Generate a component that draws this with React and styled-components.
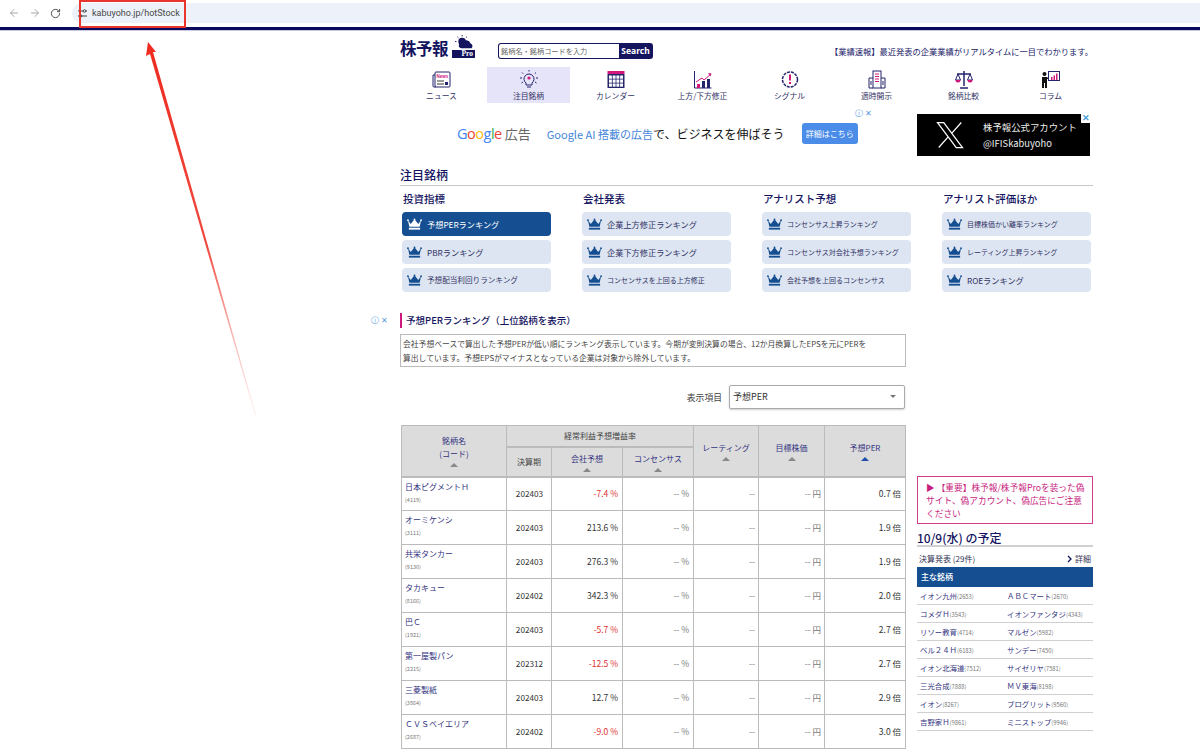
import styled, { createGlobalStyle } from 'styled-components'
import { ArrowLeft, ArrowRight, RotateCw } from 'lucide-react'

const GlobalStyle = createGlobalStyle`
  html, body { margin: 0; padding: 0; background: #fff; }
  body {
    height: 749px;
    overflow: hidden;
    font-family: "Noto Sans CJK JP", "Noto Sans", sans-serif;
    color: #333;
  }
  * { box-sizing: border-box; }
`

const Screen = styled.div`
  position: relative;
  width: 1200px;
  height: 749px;
  overflow: hidden;
`

/* browser chrome */
const BrowserBar = styled.div`
  height: 31px;
  display: flex;
  align-items: flex-start;
  padding: 3px 0 0 3px;
  border-bottom: 1px solid #c9c9e0;
  box-shadow: inset 0 -3px 0 #0a0a5c;
`
const ToolButton = styled.div`
  width: 21px;
  height: 20px;
  display: flex;
  align-items: center;
  justify-content: center;
  color: ${({ $on }) => ($on ? '#444' : '#a8a8a8')};
`
const UrlPill = styled.div`
  margin-left: 6px;
  flex: 1;
  height: 20px;
  background: #edf2fa;
  border-radius: 10px 0 0 10px;
  display: flex;
  align-items: center;
  padding-left: 2px;
  font: 400 9px Roboto, sans-serif;
  color: #474747;
`
const TuneBadge = styled.div`
  width: 16px;
  height: 16px;
  margin-right: 2px;
  color: #444;
  display: flex;
  align-items: center;
  justify-content: center;
`
const RedBox = styled.div`
  position: absolute;
  left: 79px;
  top: 0;
  width: 107px;
  height: 28px;
  border: 2px solid #e8352e;
`
const ArrowMark = styled.svg`
  position: absolute;
  left: 140px;
  top: 38px;
`
const AdChoice = styled.div`
  position: absolute;
  left: ${({ $x }) => $x}px;
  top: ${({ $y }) => $y}px;
  font: 400 8px "Liberation Sans", sans-serif;
  color: #5a9bd8;
  display: flex;
  gap: 2px;
  align-items: center;
`

/* page */
const Page = styled.div`
  margin-left: 400px;
  width: 693px;
`
const Header = styled.header`
  height: 36px;
  display: flex;
  align-items: flex-start;
`
const Logo = styled.div`
  width: 75px;
  height: 24px;
  margin-top: 3px;
  position: relative;
  display: flex;
  align-items: flex-end;
`
const LogoText = styled.span`
  font: 700 16.5px/20px "Noto Sans CJK JP", serif;
  color: #14145f;
  letter-spacing: -0.5px;
`
const ProTag = styled.span`
  position: absolute;
  right: 0;
  bottom: 0;
  width: 23px;
  height: 8px;
  background: #14145f;
  color: #fff;
  font: 700 7.5px/8px "Liberation Serif", serif;
  text-align: right;
  padding-right: 2px;
`
const SunCloud = styled.svg`
  position: absolute;
  right: 0;
  top: 0;
`
const Search = styled.form`
  margin: 12px 0 0 23px;
  width: 155px;
  height: 16px;
  display: flex;
  background: #14145f;
  border-radius: 3px;
  padding: 1px;
`
const SearchInput = styled.div`
  width: 120px;
  background: #fff;
  border-radius: 2px 0 0 2px;
  font-size: 7.2px;
  line-height: 14px;
  color: #666;
  padding-left: 2px;
`
const SearchButton = styled.div`
  flex: 1;
  text-align: center;
  color: #fff;
  font: 700 8.5px/14px "Noto Sans", sans-serif;
`
const Tagline = styled.div`
  margin: 14px 0 0 auto;
  font-size: 8.25px;
  line-height: 12px;
  color: #1c1c6a;
`
const Nav = styled.nav`
  margin-left: -2px;
  width: 696px;
  display: grid;
  grid-template-columns: repeat(8, 87px);
`
const NavItem = styled.a`
  margin: 0 2px;
  height: 36px;
  background: ${({ $active }) => ($active ? '#e6e4f8' : 'transparent')};
  display: flex;
  flex-direction: column;
  align-items: center;
  padding-top: 3px;
  font-size: 7.8px;
  line-height: 10px;
  color: #333366;
  svg { display: block; margin-bottom: 2px; }
`
const AdRow = styled.div`
  height: 57px;
  position: relative;
  display: flex;
`
const GoogleAd = styled.div`
  margin: 17px 0 0 57px;
  height: 26px;
  display: flex;
  align-items: center;
`
const GoogleWord = styled.span`
  font: 500 14.5px "Open Sans", sans-serif;
  letter-spacing: -0.5px;
  margin-right: 3px;
`
const Letter = styled.span`
  color: ${({ $c }) => $c};
`
const AdLabel = styled.span`
  font-size: 13px;
  color: #666;
  margin-right: 16px;
`
const AdCopy = styled.span`
  font-size: 12px;
  color: #111;
  width: 255px;
  white-space: nowrap;
`
const AdBlue = styled.span`
  font-size: 11px;
  color: #4285d8;
`
const AdButton = styled.div`
  width: 56px;
  height: 21px;
  background: #4a8ce8;
  border-radius: 3px;
  color: #fff;
  font-size: 8px;
  line-height: 21px;
  text-align: center;
`
const XBanner = styled.div`
  position: absolute;
  left: 517px;
  top: 11px;
  width: 173px;
  height: 42px;
  background: #000;
  color: #eee;
  display: flex;
  align-items: center;
  padding-left: 18px;
`
const XText = styled.div`
  margin-left: 18px;
  font-size: 9.4px;
  line-height: 16px;
  white-space: nowrap;
`
const XClose = styled.span`
  position: absolute;
  right: 0;
  top: 0;
  width: 9px;
  height: 9px;
  background: #fff;
  color: #4aa0d8;
  font: 700 9px/9px "Liberation Sans", sans-serif;
  text-align: center;
`
const SectionTitle = styled.h2`
  margin: 5px 0 0;
  height: 21px;
  font-size: 12px;
  font-weight: 500;
  line-height: 19px;
  color: #14145f;
  border-bottom: 1px solid #c8c8c8;
`
const RankGrid = styled.div`
  margin-top: 5px;
  padding-left: 2px;
  display: grid;
  grid-template-columns: repeat(4, 149px);
  column-gap: 31px;
`
const RankColumn = styled.div`
  display: flex;
  flex-direction: column;
  gap: 4px;
`
const RankHead = styled.h3`
  margin: 0 0 0 1px;
  height: 17px;
  font-size: 10.5px;
  font-weight: 500;
  line-height: 16px;
  color: #14145f;
`
const RankButton = styled.a`
  height: 24px;
  border-radius: 4px;
  background: ${({ $active }) => ($active ? '#154f92' : '#dce5f1')};
  color: ${({ $active }) => ($active ? '#fff' : '#333366')};
  font-size: ${({ $size }) => $size || 8.2}px;
  display: flex;
  align-items: center;
  padding: 0 0 1px 5px;
  white-space: nowrap;
  svg { margin-right: 5px; flex: none; }
`
const Columns = styled.div`
  display: flex;
  gap: 11px;
`
const Main = styled.main`
  width: 506px;
  margin-top: 21px;
`
const RankingTitle = styled.h3`
  margin: 0;
  height: 15px;
  padding-left: 4px;
  border-left: 2px solid #d0187c;
  font-size: 9.5px;
  font-weight: 500;
  line-height: 14px;
  color: #14145f;
`
const Notice = styled.p`
  margin: 6px 0 0;
  height: 33px;
  border: 1px solid #bbb;
  padding: 2px 32px 2px 2px;
  font-size: 7.8px;
  line-height: 14px;
  color: #444;
`
const FilterRow = styled.div`
  margin-top: 18px;
  height: 24px;
  display: flex;
  align-items: center;
  justify-content: flex-end;
  padding-right: 1px;
  font-size: 8.8px;
  color: #444;
`
const Select = styled.div`
  position: relative;
  margin-left: 7px;
  width: 176px;
  height: 24px;
  border: 1px solid #aaa;
  border-radius: 2px;
  box-shadow: 0 1px 2px rgba(0,0,0,.2);
  padding-left: 3px;
  font-size: 9px;
  line-height: 22px;
  color: #333;
`
const Caret = styled.span`
  position: absolute;
  right: 8px;
  top: 9px;
  border: 3px solid transparent;
  border-top: 3px solid #777;
`
const RankTable = styled.table`
  margin: 16px 0 0 1px;
  width: 504px;
  table-layout: fixed;
  border-collapse: collapse;
  font-size: 8px;
  border: 1px solid #bbb;
`
const Th = styled.th`
  background: #dcdcdc;
  border: 1px solid #bbb;
  border-bottom-width: 2px;
  font-weight: 400;
  text-align: center;
  padding: 0;
  line-height: 13px;
  color: ${({ $plain }) => ($plain ? '#444' : '#333380')};
`
const SortUp = styled.span`
  display: block;
  width: 0;
  margin: 3px auto 0;
  border: 4px solid transparent;
  border-top: 0;
  border-bottom: 4px solid ${({ $on }) => ($on ? '#1f4fa8' : '#888')};
`
const Row = styled.tr`
  height: 34px;
`
const NameCell = styled.td`
  border: 1px solid #bbb;
  padding: 2px 0 0 3px;
  vertical-align: top;
  color: #333380;
  line-height: 13px;
`
const Code = styled.small`
  display: block;
  font-size: 5.5px;
  line-height: 9px;
  margin-top: 3px;
  color: #777;
`
const Td = styled.td`
  border: 1px solid #bbb;
  padding: ${({ $center, $pad }) => ($center ? '0 0 2px 1px' : `0 ${$pad || 4}px 2px 0`)};
  text-align: ${({ $center }) => ($center ? 'center' : 'right')};
  font-size: ${({ $center }) => ($center ? 8.2 : 8.5)}px;
  color: ${({ $red, $dim }) => ($red ? '#e03030' : $dim ? '#777' : '#333')};
`
const Aside = styled.aside`
  width: 176px;
  padding-top: 184px;
`
const Warning = styled.a`
  display: block;
  height: 48px;
  border: 1px solid #cc3f8f;
  padding: 4px 6px 0 8px;
  font-size: 8.7px;
  line-height: 13px;
  color: #c81e80;
`
const ScheduleTitle = styled.h3`
  margin: 5px 0 0;
  height: 18px;
  border-bottom: 2px solid #d0d0d0;
  font-size: 12px;
  font-weight: 500;
  line-height: 17px;
  color: #14145f;
`
const EarningsRow = styled.div`
  height: 20px;
  display: flex;
  align-items: center;
  justify-content: space-between;
  padding: 3px 2px 0 2px;
  font-size: 8px;
  color: #333355;
`
const MoreLink = styled.span`
  display: flex;
  align-items: center;
  gap: 2px;
`
const BlueBar = styled.div`
  height: 20px;
  background: #154f92;
  color: #fff;
  font-size: 8px;
  font-weight: 500;
  line-height: 20px;
  padding-left: 4px;
`
const StockList = styled.ul`
  margin: 0;
  padding: 0;
  list-style: none;
`
const StockRow = styled.li`
  height: 18px;
  display: grid;
  grid-template-columns: 87px 87px;
  align-items: center;
  border-bottom: 1px solid #d0d0d0;
  padding-left: 3px;
`
const Stock = styled.a`
  font-size: 7.4px;
  color: #333380;
  white-space: nowrap;
  small { font-size: 5.8px; color: #777; }
`

function Crown({ color = '#154f92' }) {
  return (
    <svg width="15" height="14" viewBox="0 0 16 14">
      <path d="M1 3l3 4 4-5 4 5 3-4-1.500 7h-11z" fill={color} />
      <circle cx="1" cy="3" r="1" fill={color} />
      <circle cx="8" cy="2" r="1" fill={color} />
      <circle cx="15" cy="3" r="1" fill={color} />
      <rect x="2" y="11" width="12" height="2" fill={color} />
    </svg>
  )
}

const navy = '#25256e'
const pink = '#d0187c'

const NewsIcon = () => (
  <svg width="20" height="19" viewBox="0 0 20 19" fill="none">
    <rect x="3" y="2" width="15" height="15" rx="1" fill="#fff" stroke={navy} />
    <path d="M3 5H1v11q0 1 1 1h2" stroke={navy} />
    <text x="10.500" y="8" fontSize="4.500" fontWeight="700" fill={pink} textAnchor="middle" fontFamily="Liberation Sans">News</text>
    <rect x="5" y="10" width="7" height="2" fill="#999" />
    <rect x="5" y="13" width="7" height="2" fill="#999" />
    <rect x="13" y="12" width="3" height="3" fill={navy} />
  </svg>
)
const BulbIcon = () => (
  <svg width="20" height="19" viewBox="0 0 20 19" fill="none" stroke={navy}>
    <path d="M7 13a5 5 0 1 1 6 0v2H7z" fill="#e6e4f8" />
    <path d="M8 17h4" />
    <circle cx="10" cy="8" r="1.600" fill={pink} stroke="none" />
    <path d="M10 0v1.500M3 2.500l1.200 1.200M17 2.500l-1.200 1.200M1 8h2M17 8h2M2.500 13l1.500-1M17.500 13l-1.500-1" />
  </svg>
)
const CalendarIcon = () => (
  <svg width="20" height="19" viewBox="0 0 20 19">
    <rect x="1.500" y="1" width="17" height="3" fill={pink} />
    <rect x="1.500" y="4" width="17" height="14" fill={navy} />
    {[0, 1, 2, 3].map((c) =>
      [0, 1, 2].map((r) => <rect key={`${c}${r}`} x={3 + c * 3.7} y={5.5 + r * 4} width="2.900" height="3.200" fill="#fff" />)
    )}
  </svg>
)
const ChartIcon = () => (
  <svg width="20" height="19" viewBox="0 0 20 19" fill="none">
    <path d="M1.500 1v17h17" stroke={navy} />
    <rect x="4" y="14" width="3" height="4" fill={pink} />
    <rect x="9" y="11" width="3" height="7" fill={navy} />
    <rect x="14" y="9" width="3" height="9" fill={navy} />
    <path d="M3 12l6-4 2 2 7-6" stroke={pink} />
    <path d="M15 3l3.500 0.500-1 3z" fill={pink} />
  </svg>
)
const SignalIcon = () => (
  <svg width="20" height="19" viewBox="0 0 20 19" fill="none">
    <circle cx="10" cy="9.500" r="7.500" stroke={navy} strokeWidth="1.500" strokeDasharray="3 1" />
    <circle cx="10" cy="9.500" r="5.500" fill="#fff" />
    <rect x="9" y="4.500" width="2" height="6" fill={pink} />
    <rect x="9" y="12" width="2" height="2" fill={pink} />
  </svg>
)
const BuildingIcon = () => (
  <svg width="20" height="19" viewBox="0 0 20 19" fill="none" stroke={navy}>
    <rect x="6" y="1" width="8" height="17" />
    <path d="M6 8H2v10h4M14 8h4v10h-4" />
    <path d="M8 4h4M8 6.500h4M8 9h4M8 11.500h4" stroke={pink} />
    <path d="M4 11v4M16 11v4" />
  </svg>
)
const ScaleIcon = () => (
  <svg width="20" height="19" viewBox="0 0 20 19" fill="none" stroke={navy}>
    <path d="M10 1v15M3 4h14M6 18h8" strokeWidth="1.500" />
    <path d="M4 4L1.500 10h5zM16 4l-2.500 6h5z" />
    <path d="M1.500 10a2.500 2.500 0 0 0 5 0zM13.500 10a2.500 2.500 0 0 0 5 0z" fill={pink} stroke="none" />
  </svg>
)
const ColumnIcon = () => (
  <svg width="20" height="19" viewBox="0 0 20 19" fill="none">
    <circle cx="3.500" cy="4" r="2" fill="#111" />
    <path d="M1 7h5l1 1h3v1H6v9H4v-5H3v5H1z" fill="#111" />
    <rect x="7.500" y="1.500" width="11" height="9" stroke={navy} fill="#fff" />
    <rect x="10" y="7" width="1.500" height="3" fill={pink} />
    <rect x="12.500" y="5.500" width="1.500" height="4.500" fill={pink} />
    <rect x="15" y="3.500" width="1.500" height="6.500" fill={pink} />
  </svg>
)

const navItems = [
  ['ニュース', NewsIcon],
  ['注目銘柄', BulbIcon, true],
  ['カレンダー', CalendarIcon],
  ['上方/下方修正', ChartIcon],
  ['シグナル', SignalIcon],
  ['適時開示', BuildingIcon],
  ['銘柄比較', ScaleIcon],
  ['コラム', ColumnIcon],
]

const rankColumns = [
  ['投資指標', [['予想PERランキング', 8.2, true], ['PBRランキング', 8.2], ['予想配当利回りランキング', 7.6]]],
  ['会社発表', [['企業上方修正ランキング', 8.2], ['企業下方修正ランキング', 8.2], ['コンセンサスを上回る上方修正', 7]]],
  ['アナリスト予想', [['コンセンサス上昇ランキング', 7], ['コンセンサス対会社予想ランキング', 7], ['会社予想を上回るコンセンサス', 7]]],
  ['アナリスト評価ほか', [['目標株価かい離率ランキング', 7], ['レーティング上昇ランキング', 7], ['ROEランキング', 8.2]]],
]

const stocks = [
  ['日本ピグメントＨ', '4119', '202403', '-7.4', '0.7'],
  ['オーミケンシ', '3111', '202403', '213.6', '1.9'],
  ['共栄タンカー', '9130', '202403', '276.3', '1.9'],
  ['タカキュー', '8166', '202402', '342.3', '2.0'],
  ['巴Ｃ', '1921', '202403', '-5.7', '2.7'],
  ['第一屋製パン', '2215', '202312', '-12.5', '2.7'],
  ['三菱製紙', '3864', '202403', '12.7', '2.9'],
  ['ＣＶＳベイエリア', '2687', '202402', '-9.0', '3.0'],
]

const schedule = [
  [['イオン九州', '2653'], ['ＡＢＣマート', '2670']],
  [['コメダＨ', '3543'], ['イオンファンタジ', '4343']],
  [['リソー教育', '4714'], ['マルゼン', '5982']],
  [['ベル２４Ｈ', '6183'], ['サンデー', '7450']],
  [['イオン北海道', '7512'], ['サイゼリヤ', '7581']],
  [['三光合成', '7888'], ['ＭＶ東海', '8198']],
  [['イオン', '8267'], ['プログリット', '9560']],
  [['吉野家Ｈ', '9861'], ['ミニストップ', '9946']],
]

export default function App() {
  return (
    <Screen>
      <GlobalStyle />
      <BrowserBar>
        <ToolButton><ArrowLeft size={12} /></ToolButton>
        <ToolButton><ArrowRight size={12} /></ToolButton>
        <ToolButton $on><RotateCw size={11} /></ToolButton>
        <UrlPill>
          <TuneBadge>
            <svg width="11" height="11" viewBox="0 0 11 11" fill="none" stroke="currentColor">
              <path d="M1 3h5M9 3h1M1 8h1M5 8h5" />
              <circle cx="7.500" cy="3" r="1.300" />
              <circle cx="3.500" cy="8" r="1.300" />
            </svg>
          </TuneBadge>
          kabuyoho.jp/hotStock
        </UrlPill>
      </BrowserBar>
      <RedBox />
      <ArrowMark width="125" height="385" viewBox="0 0 125 385">
        <defs>
          <linearGradient id="fade" x1="0" y1="0" x2="0" y2="1">
            <stop offset="0" stopColor="#ee2a20" />
            <stop offset="0.55" stopColor="#f04a40" />
            <stop offset="1" stopColor="#f8b0a8" stopOpacity="0.2" />
          </linearGradient>
        </defs>
        <path d="M8 4L16 14 13 14 116 377 115 377 10 16 6 18z" fill="url(#fade)" />
      </ArrowMark>
      <AdChoice $x={371} $y={315}>ⓘ<span>✕</span></AdChoice>

      <Page>
        <Header>
          <Logo>
            <LogoText>株予報</LogoText>
            <ProTag>Pro</ProTag>
            <SunCloud width="22" height="17" viewBox="0 0 22 18">
              <circle cx="9" cy="8" r="4" fill="#14145f" />
              <path d="M9 1v1.500M3 8H1.500M4 3l1 1M14 3l-1 1" stroke="#14145f" />
              <path d="M8 15a3 3 0 0 1 1-6 5 5 0 0 1 9 1 3 3 0 0 1 1 5z" fill="#14145f" />
            </SunCloud>
          </Logo>
          <Search>
            <SearchInput>銘柄名・銘柄コードを入力</SearchInput>
            <SearchButton>Search</SearchButton>
          </Search>
          <Tagline>【業績速報】最近発表の企業業績がリアルタイムに一目でわかります。</Tagline>
        </Header>
        <Nav>
          {navItems.map(([label, Icon, active]) => (
            <NavItem key={label} $active={active}>
              <Icon />
              {label}
            </NavItem>
          ))}
        </Nav>
        <AdRow>
          <GoogleAd>
            <GoogleWord>
              <Letter $c="#4285f4">G</Letter><Letter $c="#ea4335">o</Letter><Letter $c="#fbbc05">o</Letter>
              <Letter $c="#4285f4">g</Letter><Letter $c="#34a853">l</Letter><Letter $c="#ea4335">e</Letter>
            </GoogleWord>
            <AdLabel>広告</AdLabel>
            <AdCopy><AdBlue>Google AI 搭載の広告</AdBlue>で、ビジネスを伸ばそう</AdCopy>
            <AdButton>詳細はこちら</AdButton>
          </GoogleAd>
          <AdChoice $x={455} $y={5}>ⓘ<span>✕</span></AdChoice>
          <XBanner>
            <svg width="30" height="30" viewBox="0 0 24 24" fill="none" stroke="#fff" strokeWidth="1">
              <path d="M2 2h5l15 20h-5zM21 2L13.500 10.500M10.500 13.500L3 22" />
            </svg>
            <XText>株予報公式アカウント<br />@IFISkabuyoho</XText>
            <XClose>✕</XClose>
          </XBanner>
        </AdRow>
        <SectionTitle>注目銘柄</SectionTitle>
        <RankGrid>
          {rankColumns.map(([head, items]) => (
            <RankColumn key={head}>
              <RankHead>{head}</RankHead>
              {items.map(([label, size, active]) => (
                <RankButton key={label} $size={size} $active={active}>
                  <Crown color={active ? '#fff' : '#154f92'} />
                  {label}
                </RankButton>
              ))}
            </RankColumn>
          ))}
        </RankGrid>
        <Columns>
          <Main>
            <RankingTitle>予想PERランキング（上位銘柄を表示）</RankingTitle>
            <Notice>会社予想ベースで算出した予想PERが低い順にランキング表示しています。今期が変則決算の場合、12か月換算したEPSを元にPERを算出しています。予想EPSがマイナスとなっている企業は対象から除外しています。</Notice>
            <FilterRow>
              表示項目
              <Select>予想PER<Caret /></Select>
            </FilterRow>
            <RankTable>
              <colgroup>
                <col width="105" /><col width="45" /><col width="71" /><col width="71" />
                <col width="65" /><col width="66" /><col width="81" />
              </colgroup>
              <thead>
                <tr style={{ height: 21 }}>
                  <Th rowSpan="2">銘柄名<br />(コード)<SortUp /></Th>
                  <Th colSpan="3" $plain>経常利益予想増益率</Th>
                  <Th rowSpan="2">レーティング<SortUp /></Th>
                  <Th rowSpan="2">目標株価<SortUp /></Th>
                  <Th rowSpan="2">予想PER<SortUp $on /></Th>
                </tr>
                <tr style={{ height: 30 }}>
                  <Th $plain>決算期</Th>
                  <Th>会社予想<SortUp /></Th>
                  <Th>コンセンサス<SortUp /></Th>
                </tr>
              </thead>
              <tbody>
                {stocks.map(([name, code, term, growth, per]) => (
                  <Row key={code}>
                    <NameCell>{name}<Code>({code})</Code></NameCell>
                    <Td $center>{term}</Td>
                    <Td $red={growth.startsWith('-')}>{growth} %</Td>
                    <Td $dim>-- %</Td>
                    <Td $dim $pad={3}>--</Td>
                    <Td $dim $pad={3}>-- 円</Td>
                    <Td $pad={4}>{per} 倍</Td>
                  </Row>
                ))}
              </tbody>
            </RankTable>
          </Main>
          <Aside>
            <Warning>▶ 【重要】株予報/株予報Proを装った偽サイト、偽アカウント、偽広告にご注意ください</Warning>
            <ScheduleTitle>10/9(水) の予定</ScheduleTitle>
            <EarningsRow>
              決算発表 (29件)
              <MoreLink>
                <svg width="6" height="8" viewBox="0 0 6 8" fill="none" stroke="#14145f" strokeWidth="1.300"><path d="M1 1l3 3-3 3" /></svg>
                詳細
              </MoreLink>
            </EarningsRow>
            <BlueBar>主な銘柄</BlueBar>
            <StockList>
              {schedule.map((pair) => (
                <StockRow key={pair[0][1]}>
                  {pair.map(([name, code]) => (
                    <Stock key={code}>{name}<small>({code})</small></Stock>
                  ))}
                </StockRow>
              ))}
            </StockList>
          </Aside>
        </Columns>
      </Page>
    </Screen>
  )
}
